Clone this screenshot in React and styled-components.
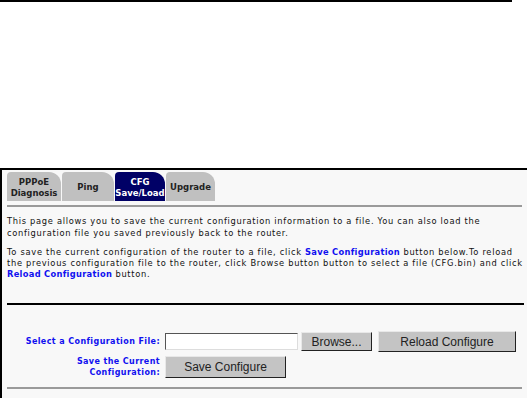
import styled, { createGlobalStyle } from "styled-components";

const Global = createGlobalStyle`
  body { margin: 0; background: #fff; font-family: "DejaVu Sans", Verdana, sans-serif; }
`;

const TopRule = styled.div`
  width: 512px;
  height: 2px;
  background: #000;
`;

const Panel = styled.div`
  margin-top: 166px;
  width: 522px;
  height: 228px;
  border: 2px solid #000;
  border-bottom: none;
  background: #f8f8f8;
  padding: 2px 0 0 5px;
  box-sizing: content-box;
`;

const Tabs = styled.div`
  display: flex;
  height: 29px;
`;

const Tab = styled.div`
  width: ${p => p.w}px;
  display: flex;
  align-items: center;
  justify-content: center;
  text-align: center;
  font-size: 8.5px;
  font-weight: bold;
  line-height: 11px;
  color: ${p => (p.active ? "#fff" : "#222")};
  background: ${p => (p.active ? "#000066" : "#c0c0c0")};
  border-radius: 4px 12px 0 0;
  margin-right: 1px;
  padding-top: 2px;
  box-sizing: border-box;
`;

const Rule = styled.div`
  width: ${p => p.w}px;
  height: 2px;
  background: ${p => p.color};
  margin-top: ${p => p.mt}px;
`;

const Para = styled.p`
  margin: ${p => p.mt}px 0 0 0;
  width: 516px;
  font-size: 8.3px;
  letter-spacing: 0.7px;
  line-height: ${p => p.lh}px;
  white-space: nowrap;
  color: #111;
`;

const Em = styled.span`
  color: #1010f0;
  font-weight: bold;
  letter-spacing: 0.3px;
`;

const Form = styled.div`
  display: grid;
  grid-template-columns: 153px auto;
  column-gap: 5px;
  row-gap: 4px;
  margin-top: 26px;
`;

const Label = styled.div`
  color: #1010f0;
  font-weight: bold;
  font-size: 8px;
  letter-spacing: 0.4px;
  line-height: 11px;
  text-align: right;
  align-self: center;
`;

const Row = styled.div`
  display: flex;
  align-items: center;
`;

const FileBox = styled.div`
  width: 131px;
  height: 15px;
  background: #fff;
  border: 1px solid;
  border-color: #555 #ddd #ddd #555;
`;

const Button = styled.div`
  width: ${p => p.w}px;
  height: ${p => p.h}px;
  margin-left: ${p => p.ml || 0}px;
  background: #c4c4c4;
  border: 1px solid;
  border-color: #e8e8e8 #222 #222 #e8e8e8;
  box-sizing: border-box;
  display: flex;
  align-items: center;
  justify-content: center;
  font-family: "Liberation Sans", Arial, sans-serif;
  font-size: 12px;
  color: #222;
`;

export default function App() {
  return (
    <>
      <Global />
      <TopRule />
      <Panel>
        <Tabs>
          <Tab w={54}>PPPoE<br />Diagnosis</Tab>
          <Tab w={52}>Ping</Tab>
          <Tab w={50} active>CFG<br />Save/Load</Tab>
          <Tab w={49}>Upgrade</Tab>
        </Tabs>
        <Rule w={515} color="#9a9a9a" mt={4} />
        <Para mt={8} lh={12}>
          This page allows you to save the current configuration information to a file. You can also load the<br />
          configuration file you saved previously back to the router.
        </Para>
        <Para mt={8} lh={11}>
          To save the current configuration of the router to a file, click <Em>Save Configuration</Em> button below.To reload<br />
          the previous configuration file to the router, click Browse button button to select a file (CFG.bin) and click<br />
          <Em>Reload Configuration</Em> button.
        </Para>
        <Rule w={517} color="#000" mt={23} />
        <Form>
          <Label>Select a Configuration File:</Label>
          <Row>
            <FileBox />
            <Button w={71} h={19} ml={3}>Browse...</Button>
            <Button w={138} h={21} ml={6}>Reload Configure</Button>
          </Row>
          <Label>Save the Current<br />Configuration:</Label>
          <Row>
            <Button w={121} h={22}>Save Configure</Button>
          </Row>
        </Form>
        <Rule w={515} color="#9a9a9a" mt={9} />
      </Panel>
    </>
  );
}
